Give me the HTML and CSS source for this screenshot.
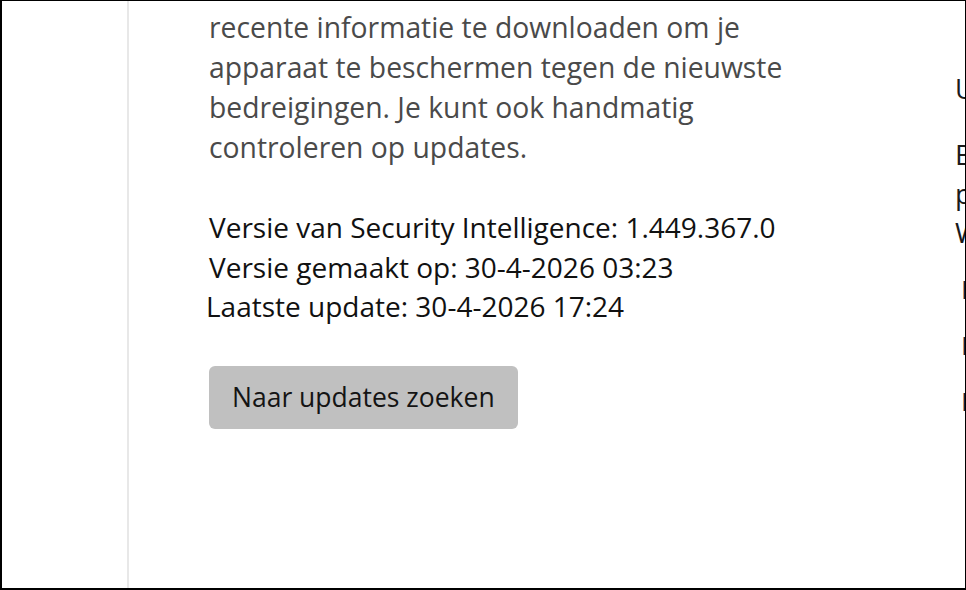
FILE: index.html
```html
<!DOCTYPE html>
<html lang="nl">
<head>
<meta charset="utf-8">
<title>Windows-beveiliging – Updates van beveiligingsinformatie</title>
<link rel="stylesheet" href="styles.css">
</head>
<body>
<div class="frame">
  <nav class="sidebar"></nav>
  <main class="content">
    <p class="desc">recente informatie te downloaden om je<br>apparaat te beschermen tegen de nieuwste<br>bedreigingen. Je kunt ook handmatig<br>controleren op updates.</p>
    <div class="info">
      <div class="info-line">Versie van Security Intelligence: 1.449.367.0</div>
      <div class="info-line">Versie gemaakt op: 30-4-2026 03:23</div>
      <div class="info-line info-line--outdent">Laatste update: 30-4-2026 17:24</div>
    </div>
    <button class="btn" type="button">Naar updates zoeken</button>
  </main>
  <aside class="related">
    <h2 class="related-title">Uw privacyinstellingen wijzigen</h2>
    <p class="related-text">Bekijk en wijzig de<br>privacyinstellingen voor uw<br>Windows-apparaat.</p>
    <div class="related-links">
      <a class="related-link" href="#">Privacyinstellingen</a>
      <a class="related-link" href="#">Privacydashboard</a>
      <a class="related-link" href="#">Privacyverklaring</a>
    </div>
  </aside>
</div>
</body>
</html>
```
FILE: styles.css
```css
* { box-sizing: border-box; }
html, body { margin: 0; padding: 0; background: #fff; }
body { font-family: "Open Sans", "Noto Sans", sans-serif; }

.frame {
  width: 966px;
  height: 590px;
  display: flex;
  overflow: hidden;
  border: 2px solid #000;
  border-top-width: 1px;
  border-right-width: 1px;
  background: #fff;
}

.sidebar {
  flex: none;
  width: 127px;
  border-right: 2px solid #e8e8e8;
}

.content {
  flex: none;
  width: 826px;
  padding-left: 80px;
  padding-top: 6px;
}

.desc {
  margin: 0;
  font-size: 28.3px;
  line-height: 40px;
  color: #4a4a4a;
}

.info {
  margin-top: 41px;
  font-size: 28px;
  line-height: 39.5px;
  color: #111;
}

.info-line--outdent { margin-left: -3px; }

.btn {
  display: block;
  margin-top: 39px;
  width: 309px;
  height: 63px;
  padding: 0 0 0 23px;
  text-align: left;
  border: none;
  border-radius: 6px;
  background: #c0c0c0;
  color: #141414;
  font-family: inherit;
  font-size: 26.5px;
}

.related {
  flex: none;
  width: 420px;
  padding-top: 70px;
  color: #1a1a1a;
  white-space: nowrap;
}

.related-title {
  margin: 0;
  font-size: 27px;
  font-weight: normal;
  line-height: 36px;
}

.related-text {
  margin: 28px 0 0;
  font-size: 28px;
  line-height: 39px;
}

.related-links {
  display: flex;
  flex-direction: column;
  gap: 26px;
  margin-top: 22px;
  padding-left: 6px;
}

.related-link {
  display: block;
  font-size: 26px;
  line-height: 30px;
  color: #1a1f3d;
  text-decoration: none;
}
```
